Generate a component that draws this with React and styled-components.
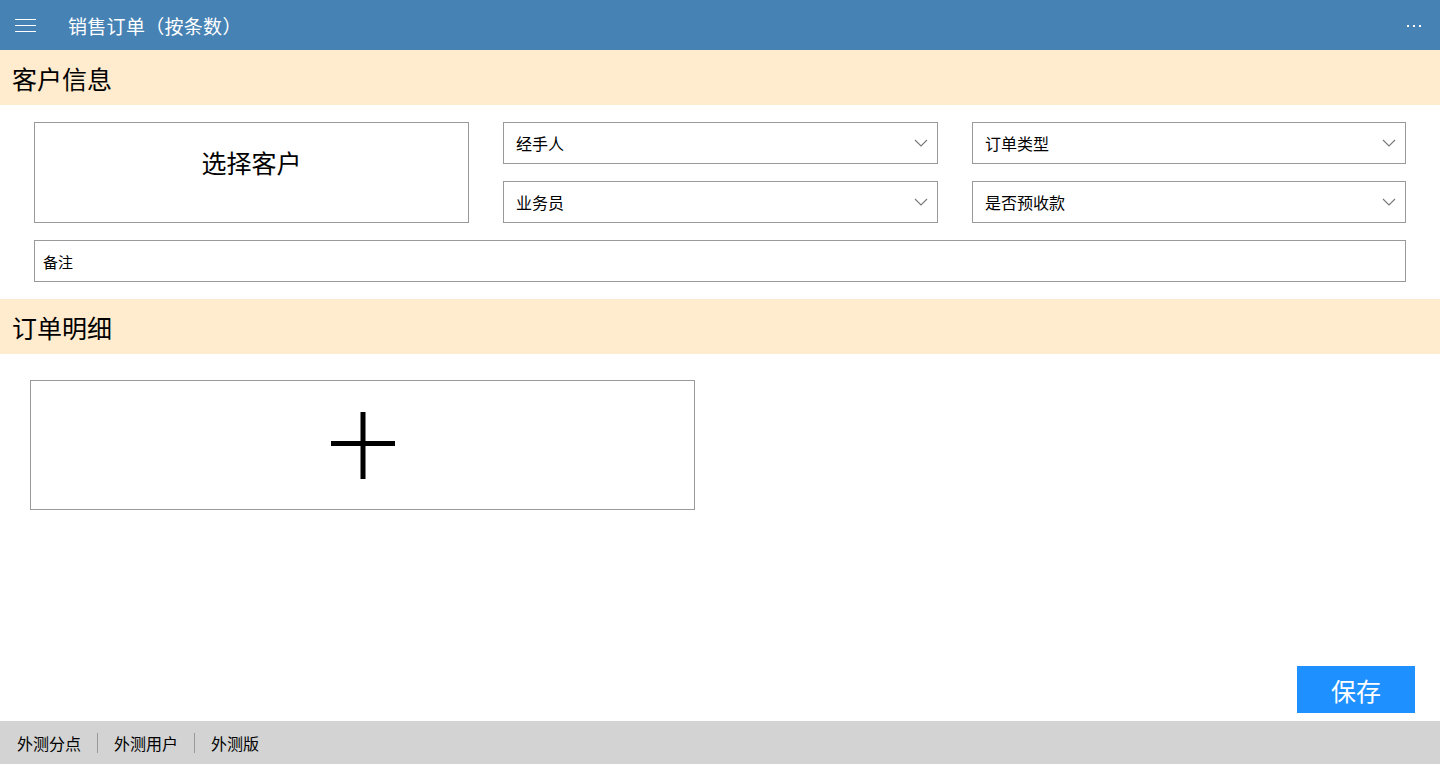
import React from "react";
import styled, { createGlobalStyle } from "styled-components";

const GlobalStyle = createGlobalStyle`
  html, body {
    margin: 0;
    padding: 0;
    background: #ffffff;
    font-family: "Noto Sans CJK SC", "Noto Sans", sans-serif;
  }
  * { box-sizing: border-box; }
`;

const Page = styled.div`
  display: flex;
  flex-direction: column;
  height: 100vh;
  overflow: hidden;
`;

const TopBar = styled.header`
  display: flex;
  align-items: center;
  height: 50px;
  padding: 0 19px 0 15px;
  background: #4682b4;
  color: #ffffff;
  flex-shrink: 0;
`;

const MenuButton = styled.div`
  display: flex;
  flex-direction: column;
  gap: 5px;
  width: 21px;
  span {
    display: block;
    height: 1px;
    background: #ffffff;
  }
`;

const AppTitle = styled.h1`
  margin: 0 0 0 32px;
  font-size: 19px;
  font-weight: 400;
  letter-spacing: 0.3px;
  flex: 1;
`;

const MoreDots = styled.div`
  display: flex;
  gap: 4px;
  margin-top: 1px;
  span {
    width: 2px;
    height: 2px;
    background: #ffffff;
  }
`;

const SectionBar = styled.div`
  display: flex;
  align-items: center;
  height: 55px;
  padding-left: 12px;
  background: #ffebcd;
  font-size: 25px;
  color: #000000;
  flex-shrink: 0;
`;

const FormArea = styled.div`
  display: flex;
  flex-direction: column;
  gap: 17px;
  padding: 17px 34px 17px 34px;
`;

const FormGrid = styled.div`
  display: grid;
  grid-template-columns: 435px 435px 1fr;
  grid-template-rows: 42px 42px;
  column-gap: 34px;
  row-gap: 17px;
`;

const CustomerPicker = styled.div`
  grid-row: span 2;
  display: flex;
  align-items: center;
  justify-content: center;
  border: 1px solid #999999;
  font-size: 25px;
  padding-bottom: 22px;
  color: #000000;
`;

const SelectBox = styled.div`
  display: flex;
  align-items: center;
  justify-content: space-between;
  border: 1px solid #999999;
  padding: 0 9px 0 12px;
  font-size: 16px;
  color: #000000;
`;

const TextBox = styled.div`
  display: flex;
  align-items: center;
  height: 42px;
  border: 1px solid #999999;
  padding-left: 8px;
  font-size: 15px;
  color: #000000;
`;

const Main = styled.div`
  flex: 1;
  display: flex;
  flex-direction: column;
  padding: 26px 25px 8px 30px;
`;

const AddCard = styled.div`
  width: 665px;
  height: 130px;
  display: flex;
  align-items: center;
  justify-content: center;
  border: 1px solid #999999;
`;

const Spacer = styled.div`
  flex: 1;
`;

const SaveButton = styled.button`
  align-self: flex-end;
  width: 118px;
  height: 47px;
  border: 0;
  background: #1e90ff;
  color: #ffffff;
  font-family: inherit;
  font-size: 25px;
  cursor: pointer;
`;

const Footer = styled.footer`
  display: flex;
  align-items: center;
  height: 43px;
  padding-left: 17px;
  background: #d3d3d3;
  font-size: 16px;
  color: #000000;
  flex-shrink: 0;
`;

const FooterItem = styled.span`
  display: flex;
  align-items: center;
  & + & {
    &::before {
      content: "";
      width: 1px;
      height: 20px;
      background: #999999;
      margin: 0 16px 0 16px;
    }
  }
`;

const Chevron = () => (
  <svg width="14" height="8" viewBox="0 0 14 8" fill="none">
    <path d="M1 1l6 6 6-6" stroke="#777" strokeWidth="1.1" />
  </svg>
);

const PlusIcon = () => (
  <svg width="64" height="67" viewBox="0 0 64 67">
    <path d="M32 0v67M0 31.5h64" stroke="#000" strokeWidth="5" />
  </svg>
);

const Select = ({ label }) => (
  <SelectBox>
    {label}
    <Chevron />
  </SelectBox>
);

export default function App() {
  return (
    <>
      <GlobalStyle />
      <Page>
        <TopBar>
          <MenuButton>
            <span />
            <span />
            <span />
          </MenuButton>
          <AppTitle>销售订单（按条数）</AppTitle>
          <MoreDots>
            <span />
            <span />
            <span />
          </MoreDots>
        </TopBar>

        <SectionBar>客户信息</SectionBar>
        <FormArea>
          <FormGrid>
            <CustomerPicker>选择客户</CustomerPicker>
            <Select label="经手人" />
            <Select label="订单类型" />
            <Select label="业务员" />
            <Select label="是否预收款" />
          </FormGrid>
          <TextBox>备注</TextBox>
        </FormArea>

        <SectionBar>订单明细</SectionBar>
        <Main>
          <AddCard>
            <PlusIcon />
          </AddCard>
          <Spacer />
          <SaveButton>保存</SaveButton>
        </Main>

        <Footer>
          <FooterItem>外测分点</FooterItem>
          <FooterItem>外测用户</FooterItem>
          <FooterItem>外测版</FooterItem>
        </Footer>
      </Page>
    </>
  );
}
